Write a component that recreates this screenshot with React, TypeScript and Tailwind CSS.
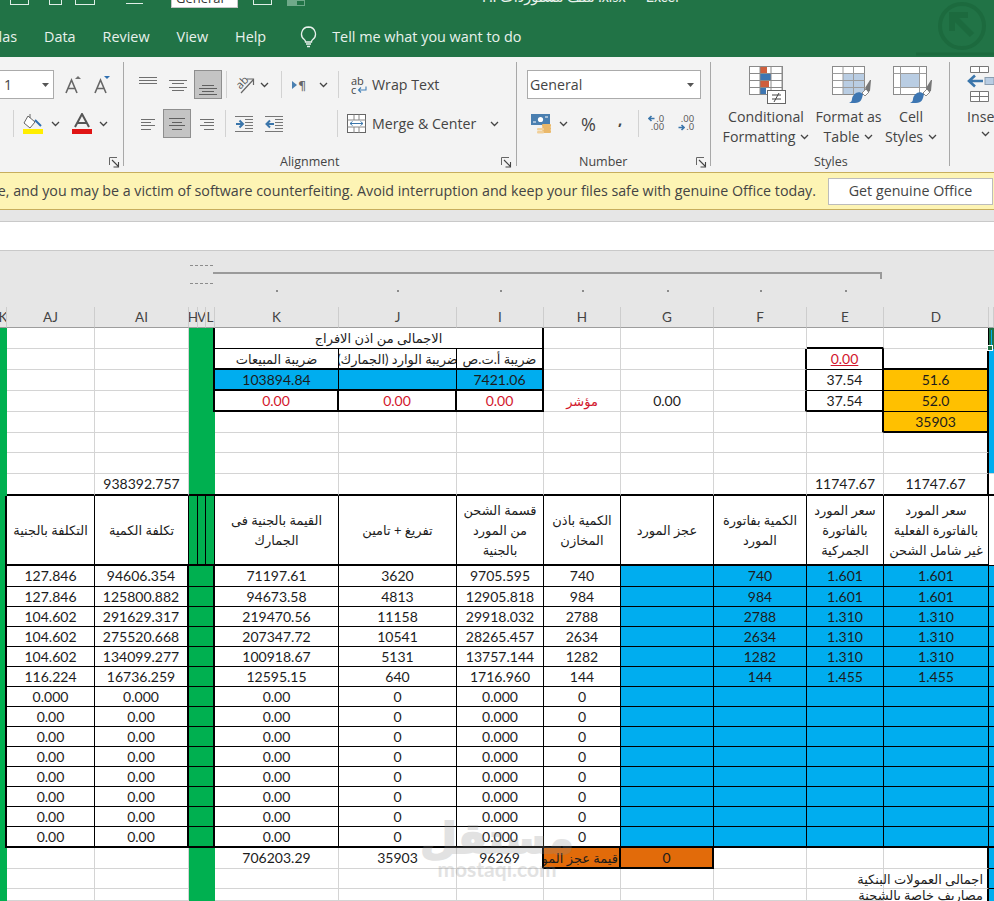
import React from 'react';

const FONT = 'font-["Open_Sans",sans-serif]';
const SHEET = 'font-["Lato","DejaVu_Sans",sans-serif]';

type B = 'g' | 'k' | 'K' | 'n';
const RB: Record<B, string> = { g: 'border-r border-r-[#d4d4d4]', k: 'border-r border-r-black', K: 'border-r-2 border-r-black', n: '' };
const BB: Record<B, string> = { g: 'border-b border-b-[#d4d4d4]', k: 'border-b border-b-black', K: 'border-b-2 border-b-black', n: '' };
const SPAN: Record<number, string> = { 1: '', 3: 'col-span-3' };

type C = { t?: React.ReactNode; r?: B; b?: B; x?: string; s?: number };
const GREEN = 'bg-[#00b050]';
const BLUE = 'bg-[#00adef]';
const ORANGE = 'bg-[#ffc000]';
const DEEP = 'bg-[#e26b0a]';
const AR = 'text-[13px]';
const RED = 'text-[#d2162c]';

const stub: C = { x: GREEN, r: 'K', b: 'n' };
const stubFree: C = { x: GREEN, r: 'n', b: 'n' };
const e: C = {};

function Cell({ t, r = 'g', b = 'g', x = '', s = 1 }: C) {
  return (
    <div className={`flex items-center justify-center whitespace-nowrap overflow-hidden text-center leading-[20px] min-w-0 text-[#1c1c1c] ${RB[r]} ${BB[b]} ${SPAN[s]} ${x}`}>{t}</div>
  );
}

const topRows: C[][] = [
  [stubFree, e, e, { s: 3, x: GREEN, r: 'K', b: 'n' }, { s: 3, t: 'الاجمالى من اذن الافراج', r: 'K', b: 'k', x: AR }, e, e, e, { b: 'K' }, { r: 'k' }, { x: `border-2 border-[#217346] ${BLUE} relative z-10 !overflow-visible`, r: 'n', b: 'n', t: <span className="absolute -left-[4px] -bottom-[4px] w-[6px] h-[6px] bg-[#217346] border border-white" /> }],
  [stubFree, e, e, { s: 3, x: GREEN, r: 'K', b: 'n' }, { t: 'ضريبة المبيعات', r: 'k', b: 'K', x: AR }, { t: 'ضريبة الوارد (الجمارك)', r: 'k', b: 'K', x: AR }, { t: 'ضريبة أ.ت.ص', r: 'K', b: 'K', x: AR }, e, e, { r: 'K' }, { t: <span className={`${RED} underline`}>0.00</span>, r: 'K', b: 'k' }, { r: 'K', b: 'K' }, { x: BLUE, r: 'n', b: 'n' }],
  [stubFree, e, e, { s: 3, x: GREEN, r: 'K', b: 'n' }, { t: '103894.84', r: 'k', b: 'K', x: BLUE }, { r: 'k', b: 'K', x: BLUE }, { t: '7421.06', r: 'K', b: 'K', x: BLUE }, e, e, { r: 'K' }, { t: '37.54', r: 'K', b: 'k' }, { t: '51.6', r: 'K', b: 'k', x: ORANGE }, { x: BLUE, r: 'n', b: 'n' }],
  [stubFree, e, e, { s: 3, x: GREEN, r: 'K', b: 'n' }, { t: <span className={RED}>0.00</span>, r: 'K', b: 'K' }, { t: <span className={RED}>0.00</span>, r: 'K', b: 'K' }, { t: <span className={RED}>0.00</span>, r: 'K', b: 'K' }, { t: <span className={`${RED} text-[13px]`}>مؤشر</span> }, { t: '0.00' }, { r: 'K' }, { t: '37.54', r: 'K', b: 'K' }, { t: '52.0', r: 'K', b: 'k', x: ORANGE }, { x: BLUE, r: 'n', b: 'n' }],
  [stubFree, e, e, { s: 3, x: GREEN, r: 'n', b: 'n' }, e, e, e, e, e, e, { r: 'K' }, { t: '35903', r: 'K', b: 'K', x: ORANGE }, { x: BLUE, r: 'n', b: 'n' }],
  [stubFree, e, e, { s: 3, x: GREEN, r: 'n', b: 'n' }, e, e, e, e, e, e, e, { r: 'K' }, { x: BLUE, r: 'n', b: 'n' }],
  [stubFree, e, e, { s: 3, x: GREEN, r: 'n', b: 'n' }, e, e, e, e, e, e, e, { r: 'K' }, { x: BLUE, r: 'n', b: 'g' }],
  [stubFree, { r: 'g', b: 'K' }, { t: '938392.757', b: 'K' }, { s: 3, x: GREEN, r: 'n', b: 'K' }, { b: 'K' }, { b: 'K' }, { b: 'K' }, { b: 'K' }, { b: 'K' }, { b: 'K' }, { t: '11747.67', b: 'K' }, { t: '11747.67', r: 'K', b: 'K' }, { r: 'n', b: 'K' }],
];

const hd = (a: string, b?: string, c?: string) => (
  <span className="text-[13px] leading-[20px] whitespace-nowrap">{a}{b && <br />}{b}{c && <br />}{c}</span>
);

const headerRow: C[] = [
  stub,
  { t: hd('التكلفة بالجنية'), r: 'k', b: 'K' },
  { t: hd('تكلفة الكمية'), r: 'k', b: 'K' },
  { x: GREEN, r: 'k', b: 'K' },
  { x: GREEN, r: 'k', b: 'K' },
  { x: GREEN, r: 'k', b: 'K' },
  { t: hd('القيمة بالجنية فى', 'الجمارك'), r: 'k', b: 'K' },
  { t: hd('تفريغ + تامين'), r: 'k', b: 'K' },
  { t: hd('قسمة الشحن', 'من المورد', 'بالجنية'), r: 'k', b: 'K' },
  { t: hd('الكمية باذن', 'المخازن'), r: 'k', b: 'K' },
  { t: hd('عجز المورد'), r: 'k', b: 'K' },
  { t: hd('الكمية بفاتورة', 'المورد'), r: 'k', b: 'K' },
  { t: hd('سعر المورد', 'بالفاتورة', 'الجمركية'), r: 'k', b: 'K' },
  { t: hd('سعر المورد', 'بالفاتورة الفعلية', 'غير شامل الشحن'), r: 'k', b: 'K' },
  { r: 'n', b: 'k' },
];

const data: (string | undefined)[][] = [
  ['127.846', '94606.354', '71197.61', '3620', '9705.595', '740', '740', '1.601', '1.601'],
  ['127.846', '125800.882', '94673.58', '4813', '12905.818', '984', '984', '1.601', '1.601'],
  ['104.602', '291629.317', '219470.56', '11158', '29918.032', '2788', '2788', '1.310', '1.310'],
  ['104.602', '275520.668', '207347.72', '10541', '28265.457', '2634', '2634', '1.310', '1.310'],
  ['104.602', '134099.277', '100918.67', '5131', '13757.144', '1282', '1282', '1.310', '1.310'],
  ['116.224', '16736.259', '12595.15', '640', '1716.960', '144', '144', '1.455', '1.455'],
  ['0.000', '0.000', '0.00', '0', '0.000', '0'],
  ['0.00', '0.00', '0.00', '0', '0.000', '0'],
  ['0.00', '0.00', '0.00', '0', '0.000', '0'],
  ['0.00', '0.00', '0.00', '0', '0.000', '0'],
  ['0.00', '0.00', '0.00', '0', '0.000', '0'],
  ['0.00', '0.00', '0.00', '0', '0.000', '0'],
  ['0.00', '0.00', '0.00', '0', '0.000', '0'],
  ['0.00', '0.00', '0.00', '0', '0.000', '0'],
];

const dataRows: C[][] = data.map((d, i) => {
  const b: B = i === data.length - 1 ? 'K' : 'k';
  return [
    stub,
    { t: d[0], r: 'k', b },
    { t: d[1], r: 'K', b },
    { s: 3, x: GREEN, r: 'K', b },
    { t: d[2], r: 'k', b },
    { t: d[3], r: 'k', b },
    { t: d[4], r: 'k', b },
    { t: d[5], r: 'k', b },
    { r: 'k', b, x: BLUE },
    { t: d[6], r: 'k', b, x: BLUE },
    { t: d[7], r: 'k', b, x: BLUE },
    { t: d[8], r: 'k', b, x: BLUE },
    { r: 'n', b, x: BLUE },
  ];
});

const bottomRows: C[][] = [
  [stubFree, e, e, { s: 3, x: GREEN, r: 'n', b: 'n' }, { t: '706203.29' }, { t: '35903' }, { t: '96269', r: 'K' }, { t: <span dir="rtl" className="text-[13px] pr-[1px]">قيمة عجز المورد</span>, r: 'K', b: 'K', x: `${DEEP} !justify-end` }, { t: '0', r: 'K', b: 'K', x: DEEP }, e, e, { r: 'K' }, { r: 'n', b: 'k', x: BLUE }],
  [stubFree, e, e, { s: 3, x: GREEN, r: 'n', b: 'n' }, e, e, e, e, e, e, e, { t: <span dir="rtl" className="text-[13px] pr-[4px]">اجمالى العمولات البنكية</span>, r: 'K', x: '!justify-end !overflow-visible' }, { r: 'n', b: 'k', x: BLUE }],
  [stubFree, e, e, { s: 3, x: GREEN, r: 'n', b: 'n' }, e, e, e, e, e, e, e, { t: <span dir="rtl" className="text-[13px] pr-[4px]">مصاريف خاصة بالشحنة</span>, r: 'K', b: 'n', x: '!justify-end !overflow-visible' }, { r: 'n', b: 'n', x: BLUE }],
];

const colLetters = ['K', 'AJ', 'AI', 'H', 'V', 'L', 'K', 'J', 'I', 'H', 'G', 'F', 'E', 'D', ''];
const dots = [6, 7, 8, 9, 10, 11, 12];

const GRID = 'grid-cols-[7px_88px_94px_9px_8px_9px_124px_118px_87px_77px_93px_93px_77px_105px_5px]';

function Chevron({ c = '#444' }: { c?: string }) {
  return (
    <svg width="9" height="6" viewBox="0 0 9 6" className="shrink-0"><path d="M1 1l3.5 3.5L8 1" fill="none" stroke={c} strokeWidth="1.3" /></svg>
  );
}

function Caret() {
  return <svg width="8" height="4" viewBox="0 0 8 4" className="shrink-0"><path d="M0 0h7L3.5 4z" fill="#555" /></svg>;
}

function Launcher() {
  return (
    <svg width="11" height="11" viewBox="0 0 11 11" className="shrink-0">
      <path d="M.5 8V.5H8" fill="none" stroke="#666" />
      <path d="M3 3l6 6M9.5 5v5h-5" fill="none" stroke="#444" strokeWidth="1.1" />
    </svg>
  );
}

function Al({ w, lines, sel = false }: { w: number; lines: [number, number, number][]; sel?: boolean }) {
  return (
    <svg width={w} height="27" viewBox={`0 0 ${w} 27`} className="shrink-0">
      {lines.map(([a, b, y], i) => <line key={i} x1={a} x2={b} y1={y + 0.5} y2={y + 0.5} stroke={sel ? '#5f5f5f' : '#6f6f6f'} strokeWidth="1" />)}
    </svg>
  );
}

function Sel({ children }: { children: React.ReactNode }) {
  return <div className="w-[28px] h-[29px] bg-[#c4c4c4] border border-[#8e8e8e] flex items-center justify-center shrink-0">{children}</div>;
}

function VDiv({ m }: { m: string }) {
  return <div className={`w-px h-[27px] bg-[#d2d2d2] shrink-0 ${m}`} />;
}

function Group({ w, children }: { w: string; children: React.ReactNode }) {
  return <div className={`${w} h-[104px] border-r border-r-[#a8a8a8] flex flex-col pt-[8px] shrink-0`}>{children}</div>;
}

function Row({ children, m = '' }: { children: React.ReactNode; m?: string }) {
  return <div className={`flex items-center h-[29px] shrink-0 ${m}`}>{children}</div>;
}

function Label({ children }: { children: React.ReactNode }) {
  return <div className="flex items-center mt-auto h-[18px] -mb-[5px] text-[12.5px] text-[#444]">{children}</div>;
}

function FontA({ up }: { up: boolean }) {
  return (
    <div className="relative w-[16px] h-[20px] shrink-0">
      <svg width="17" height="20" viewBox="0 0 17 20">
        <path d="M1 18L6.5 5 12 18M3 13.5h7" fill="none" stroke="#666" strokeWidth="1.6" />
        <path d={up ? 'M10 4l3-3 3 3z' : 'M10 1h6l-3 3z'} fill={up ? '#707070' : '#2f6fb0'} />
      </svg>
    </div>
  );
}

function IconFill() {
  return (
    <svg width="22" height="22" viewBox="0 0 22 22" className="shrink-0">
      <path d="M6 3l7 6-5 6-6-5z" fill="#fff" stroke="#666" />
      <path d="M8 1v4" stroke="#666" />
      <path d="M13 7l6 6" stroke="#2f6fb0" strokeWidth="2" />
      <rect x="1" y="16" width="20" height="5" fill="#ffee00" />
    </svg>
  );
}

function IconColor() {
  return (
    <svg width="20" height="22" viewBox="0 0 20 22" className="shrink-0">
      <path d="M3 14L10 1l7 13M5.5 10h9" fill="none" stroke="#555" strokeWidth="2" />
      <rect x="0" y="16" width="20" height="5" fill="#e01414" />
    </svg>
  );
}

function IconOrient() {
  return (
    <svg width="19" height="20" viewBox="0 0 19 20" className="shrink-0">
      <text x="1" y="11" fontSize="11" fill="#555" transform="rotate(-45 7 9)" fontFamily="Open Sans">ab</text>
      <path d="M5 18L17 5M11 4h6.500v6" fill="none" stroke="#666" strokeWidth="1.2" />
    </svg>
  );
}

function IconRtl() {
  return (
    <svg width="16" height="14" viewBox="0 0 16 14" className="shrink-0">
      <path d="M0 3l5 4-5 4z" fill="#4a7fb0" />
      <text x="6" y="12" fontSize="13" fill="#666" fontFamily="DejaVu Sans">¶</text>
    </svg>
  );
}

function IconWrap() {
  return (
    <svg width="16" height="18" viewBox="0 0 16 18" className="shrink-0">
      <text x="0" y="8.500" fontSize="11" fill="#444" fontFamily="Open Sans">ab</text>
      <text x="0" y="17.500" fontSize="11" fill="#444" fontFamily="Open Sans">c</text>
      <path d="M15 10.500v3.500H8M10 11.500l-2.500 2.500 2.500 2.500" fill="none" stroke="#3f7fb8" strokeWidth="1.1" />
    </svg>
  );
}

function IconIndent({ rev }: { rev: boolean }) {
  const arrow = rev ? 'M9 7H2M5 3.5L1.5 7 5 10.5' : 'M1 7h7M4.5 3.5L8 7l-3.5 3.5';
  return (
    <svg width="18" height="18" viewBox="0 0 18 18" className="shrink-0">
      {[1, 4, 7, 10, 13, 16].map((y, i) => <line key={i} x1={i === 0 || i === 5 ? 0 : 10} x2="18" y1={y + 0.5} y2={y + 0.5} stroke="#777" />)}
      <path d={arrow} transform="translate(0 2)" fill="none" stroke="#3b76ab" strokeWidth="2" />
    </svg>
  );
}

function IconMerge() {
  return (
    <svg width="20" height="20" viewBox="0 0 20 20" className="shrink-0">
      <rect x=".5" y=".5" width="18" height="18" fill="#fff" stroke="#666" />
      <path d="M.5 6h18M.5 13h18M7 .5V6M12 .5V6M7 13v6M12 13v6" stroke="#888" fill="none" />
      <path d="M3 9.5h13M5.5 7.500l-2.500 2 2.500 2M13.500 7.500l2.500 2-2.500 2" fill="none" stroke="#3b76ab" />
    </svg>
  );
}

function IconCurrency() {
  return (
    <svg width="21" height="21" viewBox="0 0 21 21" className="shrink-0">
      <rect x="0" y="1" width="19" height="11" fill="#4a7fb0" />
      <circle cx="9.5" cy="6.5" r="2.6" fill="#fff" />
      <path d="M2 9h3M14 4h3" stroke="#fff" />
      {[11, 14, 17].map((y) => <rect key={y} x="11" y={y} width="9" height="3" rx="1" fill="#eab86a" />)}
      {[15, 18].map((y) => <rect key={y} x="6" y={y} width="7" height="2.5" rx="1" fill="#f1cf98" />)}
    </svg>
  );
}

function IconDec({ inc }: { inc: boolean }) {
  return (
    <div className="w-[17px] h-[18px] flex flex-col items-end text-[9.5px] leading-[8.5px] text-[#555] shrink-0">
      {inc ? (
        <>
          <div className="flex items-center gap-px"><svg width="7" height="7" viewBox="0 0 7 7"><path d="M6.5 3.5H1M3.5 1L1 3.5 3.5 6" fill="none" stroke="#3b76ab" strokeWidth="1.6" /></svg><span>.0</span></div>
          <span>.00</span>
        </>
      ) : (
        <>
          <span>.00</span>
          <div className="flex items-center gap-px"><svg width="7" height="7" viewBox="0 0 7 7"><path d="M.5 3.5H6M3.5 1L6 3.5 3.5 6" fill="none" stroke="#3b76ab" strokeWidth="1.6" /></svg><span>.0</span></div>
        </>
      )}
    </div>
  );
}

function Cond() {
  const xs = [0.5, 11, 22, 33];
  const ys = [0.5, 7.5, 14.5, 21.5, 28.5];
  return (
    <svg width="38" height="38" viewBox="0 0 38 38" className="shrink-0">
      <rect x=".5" y=".5" width="33" height="28" fill="#fff" stroke="#8a8a8a" />
      <rect x="11" y="1" width="7" height="6.5" fill="#cf5f3d" />
      <rect x="11" y="8" width="11" height="6.5" fill="#3d76b2" />
      <rect x="11" y="15" width="9" height="6.5" fill="#cf5f3d" />
      <rect x="11" y="22" width="6" height="6.5" fill="#3d76b2" />
      {xs.map((x) => <line key={x} x1={x} x2={x} y1=".5" y2="28.5" stroke="#8a8a8a" />)}
      {ys.map((y) => <line key={y} x1=".5" x2="33.5" y1={y} y2={y} stroke="#8a8a8a" />)}
      <rect x="18.5" y="24.5" width="18" height="13" fill="#fff" stroke="#666" />
      <path d="M23 29h9M23 33h9M30 27l-5 9" stroke="#444" fill="none" />
    </svg>
  );
}

function Brush() {
  return (
    <>
      <path d="M20 33c1-5 6-9 11-5-1 5-2 9-8 9h-6c2-1 3-2 3-4z" fill="#3d76b2" />
      <path d="M30 27l4-4 3 3-4 4z" fill="#fff" stroke="#8a8a8a" />
      <path d="M33 22l5-8 1 0-1 11-2 1z" fill="#777" />
    </>
  );
}

function FmtTable() {
  return (
    <svg width="40" height="38" viewBox="0 0 40 38" className="shrink-0">
      <rect x=".5" y=".5" width="32" height="28" fill="#fff" stroke="#8a8a8a" />
      <rect x="11" y="7" width="21" height="21" fill="#b9cde3" />
      {[11, 21.5].map((x) => <line key={x} x1={x} x2={x} y1=".5" y2="28.5" stroke="#9c9c9c" />)}
      {[7.5, 14.5, 21.5].map((y) => <line key={y} x1=".5" x2="32.5" y1={y} y2={y} stroke="#9c9c9c" />)}
      <Brush />
    </svg>
  );
}

function CellSt() {
  return (
    <svg width="40" height="38" viewBox="0 0 40 38" className="shrink-0">
      <rect x=".5" y=".5" width="33" height="28" fill="#fff" stroke="#8a8a8a" />
      <rect x="7.5" y="7.5" width="19" height="14" fill="#b9cde3" stroke="#9c9c9c" />
      <path d="M.5 7.5h33M.5 21.5h33M7.5 .5v28M26.5 .5v28" stroke="#9c9c9c" fill="none" />
      <Brush />
    </svg>
  );
}

function InsertIcon() {
  return (
    <svg width="27" height="36" viewBox="0 0 27 36" className="shrink-0">
      <path d="M3.5.5h18v6h-18zM12.5.5v6M3.5 25.5h18v10h-18zM12.5 25.5v10M3.5 30.5h18" fill="#fff" stroke="#777" />
      <rect x="18" y="11.5" width="9" height="7" fill="#b9cde3" stroke="#8a9db0" />
      <path d="M16 15H3M8 9.5L2 15l6 5.5" fill="none" stroke="#3b76ab" strokeWidth="2.6" />
    </svg>
  );
}

function Bulb() {
  return (
    <svg width="17" height="22" viewBox="0 0 17 22" className="shrink-0">
      <path d="M8.5 1a7 7 0 0 0-4 12.7c.7.6 1 1.300 1 2.300h6c0-1 .3-1.700 1-2.300A7 7 0 0 0 8.5 1z" fill="none" stroke="#e8f1ec" strokeWidth="1.3" />
      <path d="M6 18h5M7 20.500h3" stroke="#e8f1ec" strokeWidth="1.3" />
    </svg>
  );
}

function QatBox({ w, m, c = '' }: { w: string; m: string; c?: string }) {
  return <div className={`${w} ${m} ${c} h-[5px] border-x border-b border-[#dfeee6] shrink-0`} />;
}

export default function App() {
  return (
    <div className={`relative w-[994px] h-[901px] overflow-hidden bg-white ${FONT}`}>
      {/* Title bar */}
      <div className="relative h-[57px] bg-[#217346] overflow-hidden text-[#e8f1ec]">
        <div className="flex items-start h-[9px] overflow-hidden">
          <QatBox w="w-[19px]" m="ml-[10px]" />
          <QatBox w="w-[13px]" m="ml-[20px]" />
          <QatBox w="w-[20px]" m="ml-[13px]" />
          <div className="ml-[31px] mt-[2px] w-[17px] h-[2px] border-b border-[#dfeee6] shrink-0" />
          <div className="ml-[28px] w-[67px] h-[8px] bg-white border-x border-b border-[#c6c6c6] shrink-0 overflow-hidden text-[13px] leading-[10px] text-[#333] pl-[4px]"><div className="-mt-[7px]">General</div></div>
          <QatBox w="w-[19px]" m="ml-[15px]" />
          <div className="ml-[15px] w-[9px] h-[6px] bg-[#6fa989] shrink-0" />
          <div className="w-[9px] h-[6px] border border-[#6fa989] shrink-0" />
          <div className={`ml-[177px] -mt-[13px] text-[14.4px] whitespace-nowrap leading-[20px] ${SHEET}`}>
            <span dir="rtl">ملف مستوردات P.I</span>
            <span>&nbsp;.xlsx&nbsp;&nbsp;-&nbsp;&nbsp;Excel</span>
          </div>
        </div>
        <div className="flex items-center h-[20px] mt-[18px] text-[14.4px] whitespace-nowrap">
          <div className="w-[17px] overflow-hidden flex justify-end"><span className="shrink-0">Formulas</span></div>
          <span className="ml-[27px]">Data</span>
          <span className="ml-[27px]">Review</span>
          <span className="ml-[27px]">View</span>
          <span className="ml-[27px]">Help</span>
          <span className="ml-[34px]"><Bulb /></span>
          <span className="ml-[15px]">Tell me what you want to do</span>
        </div>
        <svg width="80" height="57" viewBox="0 0 80 57" className="absolute right-0 top-0" fill="none" stroke="#1c6a3e" strokeWidth="4">
          <circle cx="48" cy="26" r="22" />
          <path d="M38 31V15h16M38 15l20 20" strokeWidth="6" />
          <path d="M2 54h78" strokeWidth="3" />
        </svg>
      </div>

      {/* Ribbon */}
      <div className="flex h-[115px] bg-[#f3f3f3] pt-[5px] text-[14.2px] text-[#444] whitespace-nowrap overflow-hidden">
        <Group w="w-[124px]">
          <Row>
            <div className="w-[54px] h-[29px] bg-white border border-l-0 border-[#ababab] flex items-center text-[14px] pl-[4px] shrink-0"><span>1</span><span className="ml-[30px]"><Caret /></span></div>
            <div className="ml-[11px]"><FontA up /></div>
            <div className="ml-[13px]"><FontA up={false} /></div>
          </Row>
          <Row m="mt-[10px]">
            <VDiv m="ml-[13px]" />
            <div className="ml-[8px]"><IconFill /></div>
            <div className="ml-[7px]"><Chevron /></div>
            <div className="ml-[12px]"><IconColor /></div>
            <div className="ml-[7px]"><Chevron /></div>
          </Row>
          <Label><div className="ml-[109px]"><Launcher /></div></Label>
        </Group>

        <Group w="w-[393px]">
          <Row>
            <div className="ml-[15px]"><Al w={18} lines={[[0, 18, 6], [0, 18, 9], [0, 18, 12]]} /></div>
            <div className="ml-[12px]"><Al w={18} lines={[[0, 18, 9], [3, 15, 12], [0, 18, 16], [3, 15, 19]]} /></div>
            <div className="ml-[7px]"><Sel><Al w={18} lines={[[3, 15, 14], [0, 18, 17], [3, 15, 20], [0, 18, 23]]} sel /></Sel></div>
            <VDiv m="ml-[4px]" />
            <div className="ml-[9px]"><IconOrient /></div>
            <div className="ml-[5px]"><Chevron /></div>
            <VDiv m="ml-[12px]" />
            <div className="ml-[10px]"><IconRtl /></div>
            <div className="ml-[11px]"><Chevron /></div>
            <VDiv m="ml-[10px]" />
            <div className="ml-[12px]"><IconWrap /></div>
            <span className="ml-[5px]">Wrap Text</span>
          </Row>
          <Row m="mt-[10px]">
            <div className="ml-[17px]"><Al w={14} lines={[[0, 14, 9], [0, 10, 12], [0, 14, 15], [0, 10, 19]]} /></div>
            <div className="ml-[8px]"><Sel><Al w={16} lines={[[0, 16, 8], [3, 13, 12], [0, 16, 15], [3, 13, 19]]} sel /></Sel></div>
            <div className="ml-[9px]"><Al w={14} lines={[[0, 14, 9], [4, 14, 12], [0, 14, 15], [4, 14, 19]]} /></div>
            <VDiv m="ml-[11px]" />
            <div className="ml-[9px]"><IconIndent rev={false} /></div>
            <div className="ml-[12px]"><IconIndent rev /></div>
            <VDiv m="ml-[54px]" />
            <div className="ml-[9px]"><IconMerge /></div>
            <span className="ml-[5px]">Merge &amp; Center</span>
            <div className="ml-[14px]"><Chevron /></div>
          </Row>
          <Label>
            <span className="ml-[156px]">Alignment</span>
            <div className="ml-auto mr-[4px]"><Launcher /></div>
          </Label>
        </Group>

        <Group w="w-[194px]">
          <Row>
            <div className="ml-[10px] w-[174px] h-[29px] bg-white border border-[#ababab] flex items-center pl-[2px] pr-[5px] justify-between"><span>General</span><Caret /></div>
          </Row>
          <Row m="mt-[10px]">
            <div className="ml-[14px]"><IconCurrency /></div>
            <div className="ml-[7px]"><Chevron /></div>
            <span className="ml-[13px] text-[18px] leading-none">%</span>
            <span className="ml-[22px] -mt-[8px] font-bold text-[15px] leading-none">,</span>
            <VDiv m="ml-[16px]" />
            <div className="ml-[8px]"><IconDec inc /></div>
            <div className="ml-[13px]"><IconDec inc={false} /></div>
          </Row>
          <Label>
            <span className="ml-[62px]">Number</span>
            <div className="ml-auto mr-[3px]"><Launcher /></div>
          </Label>
        </Group>

        <div className="w-[239px] h-[104px] border-r border-r-[#a8a8a8] flex flex-col pt-[4px] shrink-0">
          <div className="flex">
            <div className="ml-[12px] w-[86px] flex flex-col items-center leading-[20px]"><div className="ml-[4px]"><Cond /></div><span className="mt-[3px]">Conditional</span><span className="flex items-center gap-[5px]">Formatting <Chevron /></span></div>
            <div className="ml-[7px] w-[65px] flex flex-col items-center leading-[20px]"><div className="ml-[6px]"><FmtTable /></div><span className="mt-[3px]">Format as</span><span className="flex items-center gap-[5px]">Table <Chevron /></span></div>
            <div className="ml-[5px] w-[50px] flex flex-col items-center leading-[20px]"><div className="ml-[3px]"><CellSt /></div><span className="mt-[3px]">Cell</span><span className="flex items-center gap-[5px]">Styles <Chevron /></span></div>
          </div>
          <Label><span className="ml-[103px]">Styles</span></Label>
        </div>

        <div className="flex flex-col pt-[4px] pl-[17px]">
          <InsertIcon />
          <span className="mt-[5px] leading-[20px]">Insert</span>
          <div className="ml-[14px] mt-[4px]"><Chevron /></div>
        </div>
      </div>

      {/* Message bar */}
      <div className="h-[38px] bg-[#fdf4b4] border-y border-y-[#c7ae5d] flex items-center justify-end overflow-hidden text-[14.25px] text-[#444] whitespace-nowrap">
        <span className="shrink-0">Your license isn&apos;t genuine, and you may be a victim of software counterfeiting. Avoid interruption and keep your files safe with genuine Office today.</span>
        <div className="ml-[12px] mr-[1px] w-[165px] h-[27px] bg-white border border-[#bcbcbc] flex items-center justify-center shrink-0">Get genuine Office</div>
      </div>

      {/* Formula strip */}
      <div className="h-[12px] bg-[#e6e6e6] border-b border-b-[#c9c9c9]" />
      <div className="h-[29px] bg-white border-b border-b-[#c9c9c9]" />

      {/* Outline area */}
      <div className="h-[56px] bg-[#e6e6e6] pt-[14px]">
        <div className="flex h-[20px]">
          <div className="ml-[190px] w-[23px] h-[19px] border-y border-dashed border-[#8c8c8c] shrink-0" />
          <div className="w-[669px] h-[7px] border-t-2 border-r-2 border-[#9a9a9a] mt-[7px] shrink-0" />
        </div>
        <div className={`grid ${GRID} mt-[5px]`}>
          {colLetters.map((_, i) => (
            <div key={i} className="flex justify-center h-[2px]">{dots.includes(i) && <div className="w-[2px] h-[2px] bg-[#8c8c8c]" />}</div>
          ))}
        </div>
      </div>

      {/* Sheet */}
      <div className={`grid ${GRID} grid-rows-[21px_21px_21px_21px_21px_21px_20px_21px_22px_70px_21px_repeat(12,20px)_21px_21px_20px_12px] ${SHEET} text-[14px]`}>
        {colLetters.map((l, i) => (
          <div key={i} className="flex justify-center items-center overflow-hidden bg-[#e6e6e6] border-b border-b-[#9d9d9d] border-r border-r-[#cdcdcd] text-[13.5px] text-[#444]">{l}</div>
        ))}
        {[...topRows, headerRow, ...dataRows, ...bottomRows].flat().map((c, i) => <Cell key={i} {...c} />)}
      </div>

      {/* Watermark */}
      <div className="absolute left-[432px] top-[815px] w-[130px] flex flex-col items-center pointer-events-none text-[#8e8e8e] opacity-25 leading-none">
        <span dir="rtl" className={`text-[42px] font-bold leading-[44px] [-webkit-text-stroke:2px_#8e8e8e] ${SHEET}`}>مستقل</span>
        <span className={`text-[21px] font-bold leading-[20px] ${SHEET}`}>mostaqi.com</span>
      </div>
    </div>
  );
}
